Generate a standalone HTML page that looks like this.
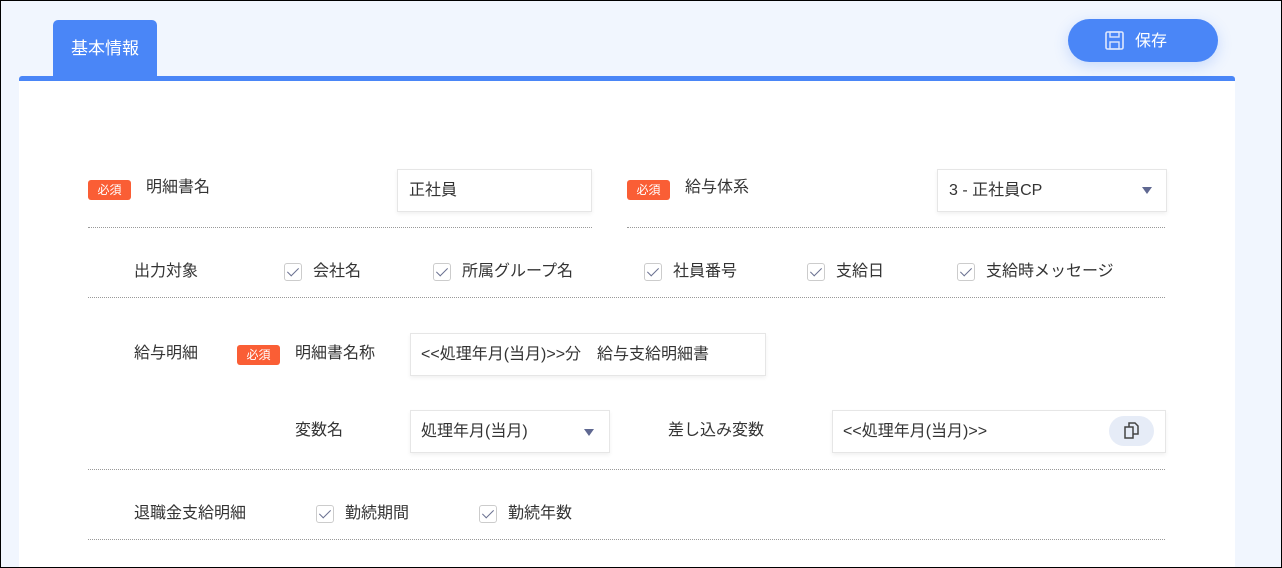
<!DOCTYPE html>
<html><head><meta charset="utf-8"><style>
*{box-sizing:border-box;margin:0;padding:0}
html,body{width:1282px;height:568px;overflow:hidden}
body{background:#f1f6fe;font-family:"Liberation Sans","Noto Sans CJK JP",sans-serif;color:#333;font-size:16px;position:relative}
.frame{position:absolute;left:0;top:0;width:1282px;height:568px;border:1px solid #000;z-index:10;pointer-events:none}
.a{position:absolute;white-space:nowrap;line-height:20px}
.tab{left:53px;top:20px;width:104px;height:58px;background:#4a86f7;border-radius:5px 5px 0 0;color:#fff;font-size:17px;padding:19px 0 0 18px}
.card{left:19px;top:76px;width:1216px;height:492px;background:#fff;border-top:5px solid #4a86f7;border-radius:3px 3px 0 0}
.save{left:1068px;top:19px;width:150px;height:43px;background:#4a86f7;border-radius:22px;color:#fff;box-shadow:0 4px 14px rgba(74,134,247,.25);font-size:16px}
.badge{width:43px;height:20px;background:#fa5e35;color:#fff;font-size:12px;border-radius:3px;text-align:center;line-height:20px}
.inp{background:#fff;border:1px solid #e6e6e6;box-shadow:0 2px 4px rgba(0,0,0,.06);height:43px;line-height:41px;padding-left:11px;font-size:16px}
.dot{height:0;border-top:1px dotted #999}
.cb{width:18px;height:18px;border:1px solid #ccc;border-radius:3px;background:#fff}
.cb:after{content:"";position:absolute;left:5px;top:1px;width:5px;height:10px;border:solid #6a7191;border-width:0 1.5px 1.5px 0;transform:rotate(45deg)}
.arr{width:0;height:0;border-left:5px solid transparent;border-right:5px solid transparent;border-top:7px solid #5f6891}
</style></head><body>
<div class="frame"></div>
<div class="a card"></div>
<div class="a tab">基本情報</div>
<div class="a save">
<svg class="a" style="left:37px;top:12px" width="19" height="19" viewBox="0 0 19 19"><rect x="1" y="1" width="17" height="17" rx="1.5" fill="none" stroke="#dfe8fd" stroke-width="1.6"/><rect x="5" y="1" width="9" height="5" fill="none" stroke="#dfe8fd" stroke-width="1.4"/><rect x="5" y="11" width="9" height="7" fill="none" stroke="#dfe8fd" stroke-width="1.4"/></svg>
<span class="a" style="left:67px;top:13px">保存</span></div>

<div class="a badge" style="left:88px;top:180px">必須</div>
<div class="a" style="left:146px;top:178px">明細書名</div>
<div class="a inp" style="left:397px;top:169px;width:195px">正社員</div>
<div class="a badge" style="left:627px;top:180px">必須</div>
<div class="a" style="left:685px;top:178px">給与体系</div>
<div class="a inp" style="left:937px;top:169px;width:230px">3 - 正社員CP</div>
<div class="a arr" style="left:1142px;top:187px"></div>
<div class="a dot" style="left:88px;top:227px;width:504px"></div>
<div class="a dot" style="left:627px;top:227px;width:538px"></div>

<div class="a" style="left:134px;top:262px">出力対象</div>
<div class="a cb" style="left:284px;top:263px"></div><div class="a" style="left:313px;top:262px">会社名</div>
<div class="a cb" style="left:433px;top:263px"></div><div class="a" style="left:462px;top:262px">所属グループ名</div>
<div class="a cb" style="left:644px;top:263px"></div><div class="a" style="left:673px;top:262px">社員番号</div>
<div class="a cb" style="left:807px;top:263px"></div><div class="a" style="left:836px;top:262px">支給日</div>
<div class="a cb" style="left:957px;top:263px"></div><div class="a" style="left:986px;top:262px">支給時メッセージ</div>
<div class="a dot" style="left:88px;top:297px;width:1077px"></div>

<div class="a" style="left:134px;top:344px">給与明細</div>
<div class="a badge" style="left:237px;top:345px">必須</div>
<div class="a" style="left:295px;top:344px">明細書名称</div>
<div class="a inp" style="left:410px;top:333px;width:356px;padding-left:10px">&lt;&lt;処理年月(当月)&gt;&gt;分　給与支給明細書</div>
<div class="a" style="left:295px;top:421px">変数名</div>
<div class="a inp" style="left:410px;top:410px;width:200px;padding-left:10px">処理年月(当月)</div>
<div class="a arr" style="left:584px;top:429px"></div>
<div class="a" style="left:668px;top:421px">差し込み変数</div>
<div class="a inp" style="left:832px;top:410px;width:334px;padding-left:10px">&lt;&lt;処理年月(当月)&gt;&gt;</div>
<div class="a" style="left:1109px;top:416px;width:45px;height:30px;border-radius:15px;background:#e6ecf7"></div>
<svg class="a" style="left:1122px;top:421px" width="19" height="19" viewBox="0 0 19 19"><path d="M3 6h8v11H3z M7 6V2h6l3 3v8h-5" fill="none" stroke="#444" stroke-width="1.5"/></svg>
<div class="a dot" style="left:88px;top:469px;width:1077px"></div>

<div class="a" style="left:134px;top:504px">退職金支給明細</div>
<div class="a cb" style="left:316px;top:505px"></div><div class="a" style="left:345px;top:504px">勤続期間</div>
<div class="a cb" style="left:479px;top:505px"></div><div class="a" style="left:508px;top:504px">勤続年数</div>
<div class="a dot" style="left:88px;top:539px;width:1077px"></div>
</body></html>
